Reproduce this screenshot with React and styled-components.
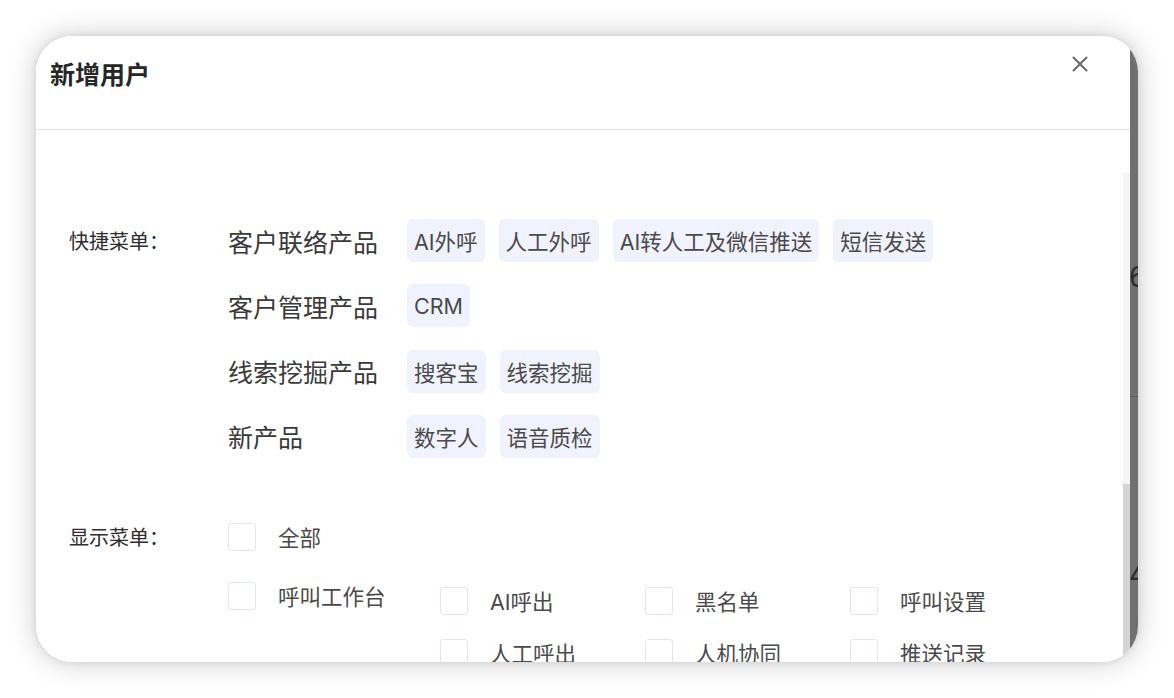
import React from "react";
import styled, { createGlobalStyle } from "styled-components";

const GlobalStyle = createGlobalStyle`
  html, body {
    margin: 0;
    padding: 0;
    background: #ffffff;
    font-family: "Inter", "Noto Sans CJK SC", sans-serif;
  }
`;

const Page = styled.div`
  width: 1174px;
  height: 698px;
  padding: 36px 36px 36px 36px;
  box-sizing: border-box;
`;

const Window = styled.div`
  display: flex;
  width: 1102px;
  height: 626px;
  border-radius: 36px;
  overflow: hidden;
  background: #fff;
  box-shadow: 0 0 28px rgba(0, 0, 0, 0.22), 0 0 6px rgba(0, 0, 0, 0.08);
`;

const Modal = styled.div`
  flex: 1;
  display: flex;
  flex-direction: column;
  background: #fff;
  min-width: 0;
`;

const Header = styled.div`
  display: flex;
  justify-content: space-between;
  align-items: flex-start;
  height: 93px;
  border-bottom: 1px solid #e3e3e3;
  padding: 0 41px 0 14px;
  flex-shrink: 0;
`;

const Title = styled.h2`
  margin: 19px 0 0;
  font-size: 25px;
  line-height: 36px;
  font-weight: 700;
  color: #262626;
  font-family: "Noto Sans CJK SC", sans-serif;
`;

const CloseButton = styled.button`
  margin-top: 19px;
  padding: 0;
  border: none;
  background: none;
  width: 18px;
  height: 18px;
  display: flex;
  align-items: center;
  justify-content: center;
  color: #6a6a6a;
`;

const Body = styled.div`
  flex: 1;
  display: flex;
  min-height: 0;
`;

const Content = styled.div`
  flex: 1;
  padding: 89px 0 0 33px;
  display: flex;
  flex-direction: column;
  gap: 65px;
`;

const Section = styled.div`
  display: grid;
  grid-template-columns: 159px 1fr;
  align-items: start;
`;

const SectionLabel = styled.div`
  font-size: 20px;
  color: #2e2e2e;
  font-family: "Noto Sans CJK SC", sans-serif;
  line-height: ${(p) => p.$lh}px;
`;

const Rows = styled.div`
  display: flex;
  flex-direction: column;
  gap: ${(p) => p.$gap}px;
`;

const ProductRow = styled.div`
  display: flex;
  align-items: center;
  height: 43px;
`;

const Category = styled.div`
  width: 179px;
  flex-shrink: 0;
  font-size: 25px;
  line-height: 40px;
  color: #3a3a3a;
  font-family: "Noto Sans CJK SC", sans-serif;
`;

const Tags = styled.div`
  display: flex;
  gap: 14px;
`;

const Tag = styled.span`
  display: inline-flex;
  align-items: center;
  height: 43px;
  padding: 0 7px;
  border-radius: 6px;
  background: #f0f2fd;
  font-size: 21.5px;
  color: #4a4a4a;
  font-family: "Inter", "Noto Sans CJK SC", sans-serif;
`;

const CheckRow = styled.div`
  display: flex;
  align-items: flex-start;
`;

const CheckItem = styled.label`
  display: flex;
  align-items: center;
  gap: 22px;
  width: ${(p) => p.$w || 205}px;
  height: 28px;
  font-size: 21.5px;
  color: #4a4a4a;
  font-family: "Inter", "Noto Sans CJK SC", sans-serif;
  white-space: nowrap;
`;

const Box = styled.span`
  width: 26px;
  height: 26px;
  flex-shrink: 0;
  border: 1px solid #dfe5fb;
  border-radius: 3px;
  background: #fff;
`;

const SubGrid = styled.div`
  display: grid;
  grid-template-columns: repeat(3, 205px);
  row-gap: 24px;
  margin-top: 5px;
`;

const ScrollTrack = styled.div`
  width: 7px;
  margin-top: 43px;
  display: flex;
  flex-direction: column;
  background: #f5f5f5;
`;

const ScrollThumb = styled.div`
  margin-top: 311px;
  flex: 1;
  background: #d4d4d4;
`;

const Mask = styled.div`
  width: 8px;
  flex-shrink: 0;
  background: #707070;
  display: flex;
  flex-direction: column;
  overflow: hidden;
`;

const MaskTop = styled.div`
  height: 361px;
  border-bottom: 1px solid #5f5f5f;
  padding-top: 226px;
  box-sizing: border-box;
`;

const BehindGlyph = styled.span`
  display: block;
  margin-left: -1px;
  font-size: 28px;
  line-height: 30px;
  color: #2b2b2b;
  font-family: "Inter", sans-serif;
`;

const MaskBottom = styled.div`
  padding-top: 162px;
`;

const products = [
  { name: "客户联络产品", tags: ["AI外呼", "人工外呼", "AI转人工及微信推送", "短信发送"] },
  { name: "客户管理产品", tags: ["CRM"] },
  { name: "线索挖掘产品", tags: ["搜客宝", "线索挖掘"] },
  { name: "新产品", tags: ["数字人", "语音质检"] },
];

const callItems = ["AI呼出", "黑名单", "呼叫设置", "人工呼出", "人机协同", "推送记录"];

export default function App() {
  return (
    <>
      <GlobalStyle />
      <Page>
        <Window>
          <Modal>
            <Header>
              <Title>新增用户</Title>
              <CloseButton aria-label="关闭">
                <svg width="16" height="16" viewBox="0 0 16 16">
                  <path d="M1.5 1.5 L14.5 14.5 M14.5 1.5 L1.5 14.5" stroke="currentColor" strokeWidth="2" strokeLinecap="round" />
                </svg>
              </CloseButton>
            </Header>
            <Body>
              <Content>
                <Section>
                  <SectionLabel $lh={43}>快捷菜单：</SectionLabel>
                  <Rows $gap={22.3}>
                    {products.map((p) => (
                      <ProductRow key={p.name}>
                        <Category>{p.name}</Category>
                        <Tags>
                          {p.tags.map((t) => (
                            <Tag key={t}>{t}</Tag>
                          ))}
                        </Tags>
                      </ProductRow>
                    ))}
                  </Rows>
                </Section>
                <Section>
                  <SectionLabel $lh={28}>显示菜单：</SectionLabel>
                  <Rows $gap={31}>
                    <CheckRow>
                      <CheckItem>
                        <Box />
                        全部
                      </CheckItem>
                    </CheckRow>
                    <CheckRow>
                      <CheckItem $w={212}>
                        <Box />
                        呼叫工作台
                      </CheckItem>
                      <SubGrid>
                        {callItems.map((c) => (
                          <CheckItem key={c}>
                            <Box />
                            {c}
                          </CheckItem>
                        ))}
                      </SubGrid>
                    </CheckRow>
                  </Rows>
                </Section>
              </Content>
              <ScrollTrack>
                <ScrollThumb />
              </ScrollTrack>
            </Body>
          </Modal>
          <Mask>
            <MaskTop>
              <BehindGlyph>6</BehindGlyph>
            </MaskTop>
            <MaskBottom>
              <BehindGlyph>4</BehindGlyph>
            </MaskBottom>
          </Mask>
        </Window>
      </Page>
    </>
  );
}
